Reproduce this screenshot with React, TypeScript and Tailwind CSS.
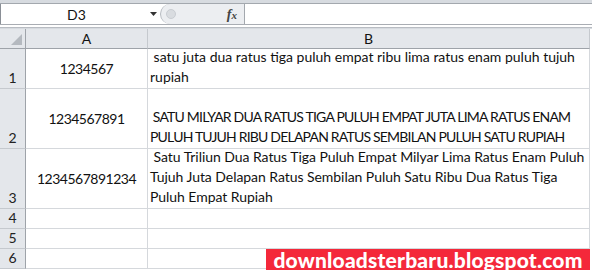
import React from "react";

const font = { fontFamily: "Lato, 'Open Sans', sans-serif" };

function RowHead({ n, h, align }: { n: number; h: string; align: string }) {
  return (
    <div className={`${h} flex ${align} justify-center border-b border-r border-[#9ea3a9] border-b-[#c5c9ce] bg-[#e4e7eb] text-[14px] text-[#222] leading-[18px] pb-[1px]`}>
      {n}
    </div>
  );
}

export default function App() {
  return (
    <div className="w-[592px] h-[270px] overflow-hidden bg-white relative text-[#111]" style={font}>
      {/* top strip */}
      <div className="h-[4px] bg-[#d7dbe0] border-b border-[#a3a8ae]" />
      {/* name box + formula bar */}
      <div className="flex h-[21px] border-b border-[#a9adb3]">
        <div className="w-[160px] flex items-center bg-white border-l border-[#8a8f96]">
          <div className="flex-1 text-center text-[14px] pl-[6px]">D3</div>
          <div className="w-[14px] flex justify-center">
            <svg width="7" height="4" viewBox="0 0 7 4"><path d="M0 0h7L3.5 4z" fill="#333" /></svg>
          </div>
        </div>
        <div className="w-[85px] relative flex items-center justify-end pr-[7px] bg-[#eceef1] rounded-l-[12px] border-l border-[#b5b9bf] border-r border-r-[#a3a8ae]">
          <div className="absolute left-[5px] top-[5px] w-[10px] h-[10px] rounded-full bg-[#d9dce0] border border-[#c9cdd2]" />
          <span className="italic font-bold text-[14px] text-[#444]" style={{ fontFamily: "'Liberation Serif', serif" }}>f<span className="text-[11px]">x</span></span>
        </div>
        <div className="flex-1 bg-white" />
      </div>
      <div className="h-[3px] bg-white border-b border-[#b8bcc2]" />
      <div className="h-[1px] bg-[#d7dbe0]" />
      {/* grid */}
      <div className="grid grid-cols-[26px_122px_442px]">
        {/* header row */}
        <div className="h-[20px] relative bg-[#e4e7eb] border-r border-b border-[#9ea3a9]">
          <svg className="absolute right-[3px] bottom-[3px]" width="11" height="11" viewBox="0 0 11 11"><path d="M11 0V11H0z" fill="#b4b9bf" /></svg>
        </div>
        <div className="h-[20px] flex items-center justify-center bg-[#e4e7eb] border-r border-b border-[#9ea3a9] border-r-[#c5c9ce] text-[14px]">A</div>
        <div className="h-[20px] flex items-center justify-center bg-[#e4e7eb] border-r border-b border-[#9ea3a9] border-r-[#c5c9ce] text-[14px]">B</div>

        {/* row 1 */}
        <RowHead n={1} h="h-[40px]" align="items-end" />
        <div className="h-[40px] flex items-center justify-center border-r border-b border-[#d5d8dc] text-[14px] tracking-[-0.5px]">1234567</div>
        <div className="h-[40px] flex flex-col justify-end border-r border-b border-[#d5d8dc] pl-[2px] pb-[1px] text-[14px] leading-[20px] whitespace-pre">
          <div>{" satu juta dua ratus tiga puluh empat ribu lima ratus enam puluh tujuh"}</div>
          <div>rupiah</div>
        </div>

        {/* row 2 */}
        <RowHead n={2} h="h-[60px]" align="items-end" />
        <div className="h-[60px] flex items-center justify-center border-r border-b border-[#d5d8dc] text-[14px] tracking-[-0.5px]">1234567891</div>
        <div className="h-[60px] flex flex-col justify-end border-r border-b border-[#d5d8dc] pl-[2px] pb-[1px] text-[14px] leading-[20px] whitespace-pre tracking-[-0.8px]">
          <div>{" SATU MILYAR DUA RATUS TIGA PULUH EMPAT JUTA LIMA RATUS ENAM"}</div>
          <div>PULUH TUJUH RIBU DELAPAN RATUS SEMBILAN PULUH SATU RUPIAH</div>
        </div>

        {/* row 3 */}
        <RowHead n={3} h="h-[60px]" align="items-end" />
        <div className="h-[60px] flex items-center justify-center border-r border-b border-[#d5d8dc] text-[14px] tracking-[-0.5px]">1234567891234</div>
        <div className="h-[60px] flex flex-col justify-end border-r border-b border-[#d5d8dc] pl-[2px] pb-[1px] text-[14px] leading-[20px] whitespace-pre tracking-[-0.05px]">
          <div>{" Satu Triliun Dua Ratus Tiga Puluh Empat Milyar Lima Ratus Enam Puluh"}</div>
          <div>Tujuh Juta Delapan Ratus Sembilan Puluh Satu Ribu Dua Ratus Tiga</div>
          <div>Puluh Empat Rupiah</div>
        </div>

        {[4, 5, 6].map((n) => (
          <React.Fragment key={n}>
            <RowHead n={n} h="h-[20px]" align="items-center" />
            <div className="h-[20px] border-r border-b border-[#d5d8dc]" />
            <div className="h-[20px] border-r border-b border-[#d5d8dc]" />
          </React.Fragment>
        ))}
      </div>

      {/* watermark */}
      <div
        className="absolute right-[2px] bottom-0 w-[324px] h-[21px] bg-[#f4283a] text-white font-black text-[21px] leading-[20px] tracking-[0.2px] flex items-center justify-center whitespace-nowrap"
        style={{ fontFamily: "Lato, sans-serif" }}
      >
        downloadsterbaru.blogspot.com
      </div>
    </div>
  );
}
